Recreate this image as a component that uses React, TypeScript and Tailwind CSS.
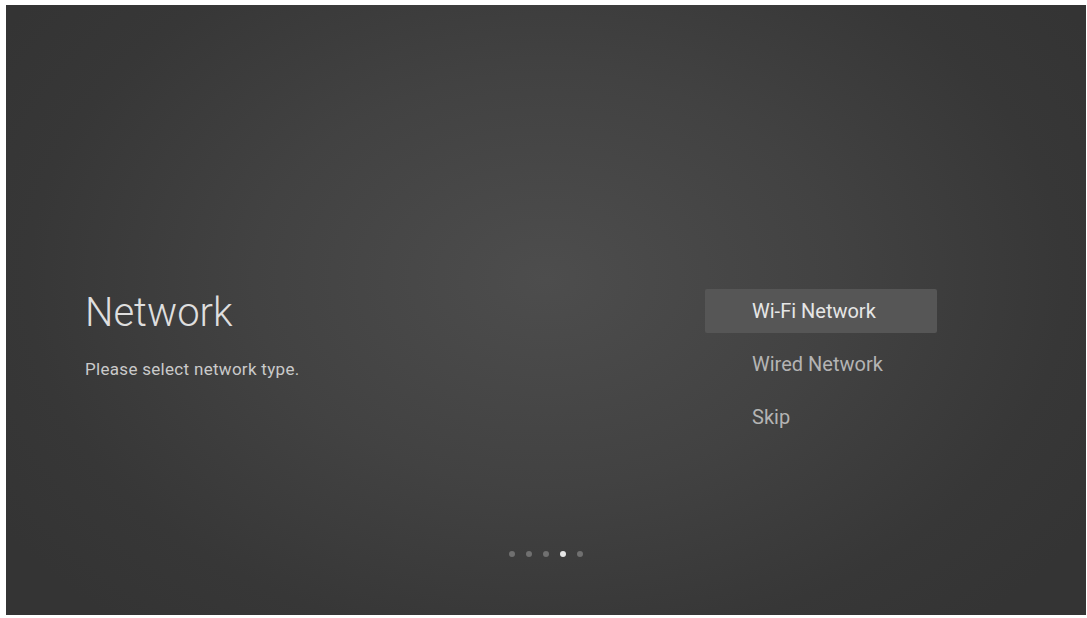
export default function App() {
  const items = ["Wi-Fi Network", "Wired Network", "Skip"];
  const dots = [false, false, false, true, false];
  return (
    <div className="h-[618px] w-full bg-white pl-[6px] pt-[5px]" style={{ fontFamily: "Roboto, 'Noto Sans', sans-serif" }}>
      <div className="flex h-[610px] w-[1080px] flex-col bg-[radial-gradient(ellipse_60%_75%_at_50%_45%,#4d4d4d_0%,#424242_45%,#373737_80%,#343434_100%)]">
        <div className="flex pt-[284px]">
          <div className="ml-[79px] mt-[4px] flex flex-col">
            <div className="text-[40px] font-light leading-[40px] text-[#dedede]">Network</div>
            <div className="mt-[28px] text-[17px] leading-[17px] tracking-[0.3px] text-[#cacaca]">Please select network type.</div>
          </div>
          <div className="ml-auto mr-[149px] flex w-[232px] flex-col gap-[9px]">
            {items.map((t, i) => (
              <div
                key={t}
                className={
                  i === 0
                    ? "flex h-[44px] items-center rounded-[2px] bg-[#565656] pl-[47px] text-[20px] leading-[20px] text-[#e6e6e6]"
                    : "flex h-[44px] items-center pl-[47px] text-[20px] leading-[20px] text-[#b4b4b4]"
                }
              >
                {t}
              </div>
            ))}
          </div>
        </div>
        <div className="mt-auto flex justify-center gap-[11px] pb-[58px]">
          {dots.map((a, i) => (
            <div key={i} className={a ? "h-[6px] w-[6px] rounded-full bg-[#e6e6e6]" : "h-[6px] w-[6px] rounded-full bg-[#707070]"} />
          ))}
        </div>
      </div>
    </div>
  );
}
